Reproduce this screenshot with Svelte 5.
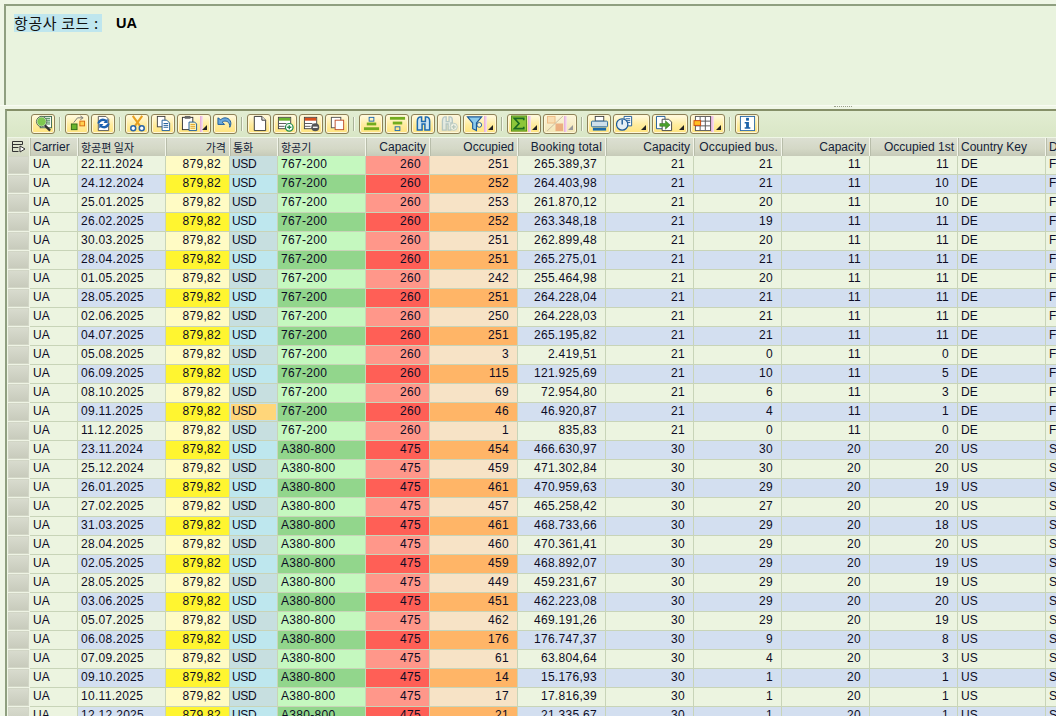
<script>
  const f = (date, occ, book, occB, occF, a380) => ({ date, occ, book, occB, occF, a380 });
  const rows = [
    f('22.11.2024',251,'265.389,37',21,11),f('24.12.2024',252,'264.403,98',21,10),f('25.01.2025',253,'261.870,12',20,10),
    f('26.02.2025',252,'263.348,18',19,11),f('30.03.2025',251,'262.899,48',20,11),f('28.04.2025',251,'265.275,01',21,11),
    f('01.05.2025',242,'255.464,98',20,11),f('28.05.2025',251,'264.228,04',21,11),f('02.06.2025',250,'264.228,03',21,11),
    f('04.07.2025',251,'265.195,82',21,11),f('05.08.2025',3,'2.419,51',0,0),f('06.09.2025',115,'121.925,69',10,5),
    f('08.10.2025',69,'72.954,80',6,3),f('09.11.2025',46,'46.920,87',4,1),f('11.12.2025',1,'835,83',0,0),
    f('23.11.2024',454,'466.630,97',30,20,1),f('25.12.2024',459,'471.302,84',30,20,1),f('26.01.2025',461,'470.959,63',29,19,1),
    f('27.02.2025',457,'465.258,42',27,20,1),f('31.03.2025',461,'468.733,66',29,18,1),f('28.04.2025',460,'470.361,41',29,20,1),
    f('02.05.2025',459,'468.892,07',29,19,1),f('28.05.2025',449,'459.231,67',29,19,1),f('03.06.2025',451,'462.223,08',29,20,1),
    f('05.07.2025',462,'469.191,26',29,19,1),f('06.08.2025',176,'176.747,37',9,8,1),f('07.09.2025',61,'63.804,64',4,3,1),
    f('09.10.2025',14,'15.176,93',1,1,1),f('10.11.2025',17,'17.816,39',1,1,1),f('12.12.2025',21,'21.335,67',1,1,1)
  ];
</script>

<div class="page">
  <section class="top">
    <div class="title"><span class="label">항공사 코드 :</span><strong class="code">UA</strong></div>
  </section>
  <div class="splitter"><span class="grip"></span></div>
  <section class="alv">
    <div class="toolbar">
      <div class="tb w24"><svg viewBox="0 0 20 18"><rect x="6.500" y="1.500" width="12" height="12" fill="#fff" stroke="#3c6a50"/><path d="M12 3.500h5M13 5.500h4M13 7.500h4M13 9.500h4" stroke="#2c7d3a"/><circle cx="8" cy="7" r="5" fill="#7ec850" stroke="#d8ecd0"/><circle cx="8" cy="7" r="5.500" fill="none" stroke="#5a6a5a"/><path d="M11.500 11l5.500 5.500" stroke="#333" stroke-width="2.400"/></svg></div>
      <span class="sep"></span>
      <div class="tb w24"><svg viewBox="0 0 20 18"><rect x="3.500" y="9.500" width="6" height="6" fill="#6ab42c" stroke="#2f6a17"/><rect x="12.500" y="6.500" width="5" height="5" fill="#ffd050" stroke="#d86a10"/><path d="M6 8L10 3h5" fill="none" stroke="#777"/><path d="M13 1l3 2-3 2" fill="none" stroke="#777"/></svg></div>
      <div class="tb w24"><svg viewBox="0 0 20 18"><path d="M4.500 1.500h8l3 3v12h-11z" fill="#fff" stroke="#555"/><path d="M3.500 9a6 6 0 0 1 9.500-4l1.500-1v4.500H10l1.500-1.500a3.800 3.800 0 0 0-5.500 2zM16.500 9a6 6 0 0 1-9.500 4l-1.500 1V9.500H10l-1.500 1.500a3.800 3.800 0 0 0 5.500-2z" fill="#1c62b0"/></svg></div>
      <span class="sep"></span>
      <div class="tb w24"><svg viewBox="0 0 20 18"><path d="M5 1l8 11M15 1L7 12" stroke="#e8a020" stroke-width="2.200"/><circle cx="5.500" cy="14" r="2.600" fill="#fff" stroke="#2a66a8" stroke-width="1.600"/><circle cx="14.500" cy="14" r="2.600" fill="#fff" stroke="#2a66a8" stroke-width="1.600"/></svg></div>
      <div class="tb w24"><svg viewBox="0 0 20 18"><rect x="3.500" y="1.500" width="8" height="11" fill="#fff" stroke="#444"/><path d="M8.500 5.500h5l3 3v8h-8z" fill="#fff" stroke="#1c5a98"/><path d="M10 9h5M10 11h5M10 13h5" stroke="#1c5a98"/></svg></div>
      <div class="tb w34 menu paste"><svg viewBox="0 0 20 18"><rect x="2.500" y="2.500" width="11" height="13" fill="#fff" stroke="#333"/><rect x="5" y="1" width="6" height="3" fill="#666"/><path d="M9.500 7.500h6l2 2v7h-8z" fill="#fff6c0" stroke="#1c5a98"/><path d="M11 10h5M11 12h5M11 14h5" stroke="#e0a020"/></svg></div>
      <div class="tb w24"><svg viewBox="0 0 20 18"><path d="M2 3v7h7L6.500 7.500C10 5 15 7 14.500 13c3-5 0-10-5-10-2 0-3.500 1-4.500 2z" fill="#6aa8dc" stroke="#1c5a98"/></svg></div>
      <span class="sep"></span>
      <div class="tb w24"><svg viewBox="0 0 20 18"><path d="M4.500 1.500h8l4 4v11h-12z" fill="#fff" stroke="#333"/><path d="M12.500 1.500v4h4" fill="#eee" stroke="#333"/></svg></div>
      <div class="tb w24"><svg viewBox="0 0 20 18"><rect x="2.500" y="2.500" width="13" height="12" fill="#fff" stroke="#444"/><rect x="3" y="3" width="12" height="3" fill="#6ab42c"/><path d="M3 9h8M3 12h6" stroke="#555"/><circle cx="14" cy="13" r="4" fill="#fff" stroke="#1f8a4a" stroke-width="1.300"/><path d="M11.800 13h4.400M14 10.800v4.400" stroke="#1f8a4a" stroke-width="1.400"/></svg></div>
      <div class="tb w24"><svg viewBox="0 0 20 18"><rect x="2.500" y="2.500" width="13" height="12" fill="#fff" stroke="#444"/><rect x="3" y="3" width="12" height="3" fill="#d8501e"/><path d="M3 9h8M3 12h6" stroke="#555"/><circle cx="14" cy="13" r="4.200" fill="#555"/><path d="M11.500 13h5" stroke="#fff" stroke-width="1.400"/></svg></div>
      <div class="tb w24"><svg viewBox="0 0 20 18"><rect x="3.500" y="2.500" width="10" height="11" fill="#fff" stroke="#555"/><rect x="7.500" y="5.500" width="9" height="10" fill="#fff" stroke="#c0502c"/></svg></div>
      <span class="sep"></span>
      <div class="tb w24"><svg viewBox="0 0 20 18"><rect x="7.500" y="2.500" width="5" height="4" fill="none" stroke="#1c6ab0"/><rect x="5" y="8" width="10" height="3" fill="#72ac1e"/><rect x="2" y="13" width="16" height="3" fill="#72ac1e"/></svg></div>
      <div class="tb w24"><svg viewBox="0 0 20 18"><rect x="2" y="2" width="16" height="3" fill="#72ac1e"/><rect x="5" y="7" width="10" height="3" fill="#72ac1e"/><rect x="7.500" y="12.500" width="5" height="4" fill="none" stroke="#1c6ab0"/></svg></div>
      <div class="tb w24"><svg viewBox="0 0 20 18"><path d="M3.500 6.500q0-4 3-4.500h1.500v5h4V2h1.500q3 .5 3 4.500v9.500h-5V9.500h-3v6.500h-5z" fill="#cfe6f2" stroke="#1c6ab0" stroke-width="1.600"/></svg></div>
      <div class="tb w24 off"><svg viewBox="0 0 20 18"><path d="M2.500 6.500q0-4 2.500-4.500h1.500v5h3V2H11q2 .5 2 3.500v3h-1.500v7.500h-3V9.500H6.500v6.500h-4z" fill="#dfeaea" stroke="#9cb8c0" stroke-width="1.400"/><circle cx="14.500" cy="12.500" r="3.800" fill="#eef4f0" stroke="#a8c0c0"/><path d="M12.300 12.500h4.400M14.500 10.300v4.400" stroke="#9cb8b8" stroke-width="1.300"/></svg></div>
      <div class="tb w34 menu"><svg viewBox="0 0 20 18"><path d="M1.500 2h15l-5.500 6.500v8l-4-2V8.500z" fill="#8ccbec" stroke="#1c5a98" stroke-width="1.200"/><circle cx="14" cy="10.500" r="2.500" fill="#fff6d0" stroke="#1c5a98"/></svg></div>
      <span class="sep"></span>
      <div class="tb w34 menu sum"><svg viewBox="0 0 20 18"><rect x="1.500" y="1" width="16" height="16" fill="#8cc63a" stroke="#4d8a1c"/><path d="M14.500 5.500V3.500H4.500L9.500 9l-5 5.500h10v-2" fill="none" stroke="#1c6a22" stroke-width="1.800"/></svg></div>
      <div class="tb w34 menu off sum"><svg viewBox="0 0 20 18"><rect x="1.500" y="1.500" width="8" height="7" fill="#f8d8a8" stroke="#eba868"/><rect x="10" y="9" width="8" height="8" fill="#e89868"/><path d="M1 17L18 1" stroke="#b8a890"/></svg></div>
      <span class="sep"></span>
      <div class="tb w24"><svg viewBox="0 0 20 18"><rect x="5.500" y="1.500" width="9" height="5" fill="#fff" stroke="#444"/><rect x="1.500" y="6.500" width="17" height="6" rx="1" fill="#cfe0ea" stroke="#2a6a9c"/><rect x="3" y="13.500" width="14" height="3" fill="#1c6aa8"/></svg></div>
      <div class="tb w37 menu2"><svg viewBox="0 0 20 18"><path d="M8.500 1.500h8v10h-8z" fill="#fff" stroke="#1c5a98"/><path d="M10 4h5M10 6h5M10 8h5" stroke="#1c5a98"/><circle cx="6.500" cy="10" r="6" fill="#e4eef4" stroke="#1c5a98" stroke-width="1.300"/><path d="M6.500 5v5" stroke="#1c5a98" stroke-width="1.500"/></svg></div>
      <div class="tb w36 menu2"><svg viewBox="0 0 20 18"><path d="M1.500 1.500h9v4h-2v9h-7z" fill="#fff" stroke="#1c5a98"/><path d="M7.500 4.500h7l3 3v9h-10z" fill="#fff" stroke="#444"/><path d="M5 9h6V6l5 4.500-5 4.500v-3H5z" fill="#4aa02c" stroke="#2a6a18" stroke-width=".5"/></svg></div>
      <div class="tb w35 menu"><svg viewBox="0 0 20 18"><rect x="2.500" y="1.500" width="16" height="15" fill="#fff" stroke="#555"/><path d="M7.500 2v14M13 2v14M3 6.500h15M3 11.500h15" stroke="#555"/><rect x="1" y="6" width="7" height="5" fill="#ffc020" stroke="#d04a10"/></svg></div>
      <span class="sep"></span>
      <div class="tb w24"><svg viewBox="0 0 20 18"><rect x="2.500" y="1.500" width="15" height="15" fill="#fff" stroke="#2a6aa8"/><rect x="8.500" y="3" width="3" height="3" fill="#1c62a8"/><path d="M7 7.500h4.500V13H13v1.500H7V13h1.500V9H7z" fill="#1c62a8"/></svg></div>
    </div>
    <div class="grid">
      <div class="row head">
        <div class="corner"><svg width="14" height="12" viewBox="0 0 14 12"><path d="M.5.500h10v3M.5.500v10h6M.5 3.500h10M.5 6.500h6" fill="none" stroke="#333"/><path d="M8 5l5 3-5 3z" fill="#fff" stroke="#333"/></svg></div>
        <div class="h">Carrier</div><div class="h ko">항공편 일자</div><div class="h r ko">가격</div><div class="h ko">통화</div><div class="h ko">항공기</div>
        <div class="h r">Capacity</div><div class="h r">Occupied</div><div class="h r wide">Booking total</div><div class="h r">Capacity</div><div class="h r wide">Occupied bus.</div><div class="h r">Capacity</div><div class="h r">Occupied 1st</div><div class="h">Country Key</div><div class="h">De</div>
      </div>
      {#each rows as x, i}
        <div class="row" class:even={i % 2 === 1}>
          <div class="sel"></div>
          <div class="c key">UA</div>
          <div class="c n z">{x.date}</div>
          <div class="c nr price">879,82</div>
          <div class="c cur" class:hot={i === 13}><span>USD</span></div>
          <div class="c n plane">{x.a380 ? 'A380-800' : '767-200'}</div>
          <div class="c nr cap">{x.a380 ? 475 : 260}</div>
          <div class="c nr occ">{x.occ}</div>
          <div class="c nr z">{x.book}</div>
          <div class="c nr z">{x.a380 ? 30 : 21}</div>
          <div class="c nr z">{x.occB}</div>
          <div class="c nr z">{x.a380 ? 20 : 11}</div>
          <div class="c nr z">{x.occF}</div>
          <div class="c z">{x.a380 ? 'US' : 'DE'}</div>
          <div class="c z">{x.a380 ? 'SFO' : 'FRA'}</div>
        </div>
      {/each}
    </div>
  </section>
</div>

<style>
  :global(body) { margin: 0; background: #eff6e6; overflow: hidden; }
  .page { width: 1056px; height: 716px; overflow: hidden; padding-top: 4px; box-sizing: border-box; font-family: "Liberation Sans", "Noto Sans CJK KR", sans-serif; font-size: 12px; color: #0c0c24; }
  .top { height: 101px; margin-left: 4px; border-top: 2px solid #8f9f80; border-left: 2px solid #8f9f80; background: #e9f3de; box-sizing: border-box; padding: 8px 0 0 8px; }
  .title { display: flex; align-items: center; height: 18px; }
  .label { display: block; width: 88px; height: 18px; line-height: 17px; background: #bfe6ee; font-family: "Noto Sans CJK KR", sans-serif; font-size: 15px; white-space: nowrap; letter-spacing: .6px; color: #111; }
  .code { margin-left: 14px; font-size: 14.500px; color: #000; }
  .splitter { height: 4px; border-top: 1px solid #f8fbf2; box-sizing: border-box; position: relative; }
  .grip { position: absolute; left: 834px; top: 0; width: 18px; border-top: 1px dotted #9aa08a; }
  .alv { margin-left: 5px; border-top: 2px solid #858f68; border-left: 2px solid #8f9f80; }
  .toolbar { height: 26px; display: flex; align-items: center; gap: 2px; padding: 0 0 1px 24px; box-sizing: border-box; background: linear-gradient(#e2edd2, #d9e6c6); }
  .sep { width: 2px; height: 14px; margin: 0 2px; background: #a9b298; border-right: 1px solid #f4f8ea; box-sizing: border-box; }
  .tb { position: relative; height: 20px; box-sizing: border-box; border: 1px solid #8d8158; border-radius: 3px; background: linear-gradient(#fffbe2, #ffec9e 55%, #ffe47e); box-shadow: inset 0 0 0 1px #fff8d8; flex: none; display: flex; align-items: center; padding-left: 2px; }
  .tb svg { width: 19px; height: 17px; display: block; }
  .w24 { width: 24px; } .w34 { width: 34px; } .w35 { width: 35px; } .w36 { width: 36px; } .w37 { width: 37px; }
  .off svg { opacity: .72; }
  .off { background: linear-gradient(#fbf5dc, #f2e6b4); }
  .menu::before { content: ""; position: absolute; left: 20px; top: 1px; bottom: 1px; width: 3px; background: linear-gradient(90deg, #e4a8d8, #f6e6f0); }
  .paste::before { left: 22px; }
  .sum::before { left: 20px; }
  .menu::after, .menu2::after { content: ""; position: absolute; right: 3px; bottom: 3px; border-style: solid; border-width: 0 0 5px 5px; border-color: transparent transparent #222 transparent; }
  .off::after { border-color: transparent transparent #999 transparent; }
  .grid { width: 1200px; }
  .row { display: grid; grid-template-columns: 22px 48px 88px 64px 48px 88px 64px 88px 88px 88px 88px 88px 88px 88px 88px; height: 19px; padding-left: 1px; }
  .head { height: 18px; margin-top: 1px; }
  .corner { display: flex; align-items: center; justify-content: center; border-right: 1px solid #eef3e4; background: linear-gradient(#e4e9d6, #d3d9c2); box-sizing: border-box; }
  .h { background: linear-gradient(#dcdfd2, #d4d8c6 60%, #c6cab8); border-right: 1px solid #f2f5ea; border-left: 1px solid #b8bdaa; line-height: 18px; padding: 0 3px 0 2px; box-sizing: border-box; white-space: nowrap; overflow: hidden; color: #142238; }
  .wide { letter-spacing: .15px; }
  .ko { font-family: "Noto Sans CJK KR", sans-serif; font-size: 11px; }
  .r { text-align: right; }
  .sel { background: linear-gradient(#d9dccf, #c7cabb); border: 1px solid #eef3e4; border-width: 0 1px 1px 0; box-sizing: border-box; box-shadow: inset 0 0 0 1px #d2d6c6; }
  .c { background: #ecf4e0; border-right: 1px solid #c8d4b8; border-bottom: 1px solid #c8d4b8; box-sizing: border-box; line-height: 17px; padding: 0 3px; white-space: nowrap; overflow: hidden; }
  .n, .nr { letter-spacing: .3px; }
  .nr { text-align: right; padding-right: 8px; }
  .cur span { letter-spacing: -.3px; }
  .price { background: #fffbc4; }
  .cur { background: #c7dfe0; padding-left: 2px; }
  .plane { background: #c5f8bf; }
  .cap { background: #ff978a; }
  .occ { background: #f7e3c6; }
  .even .z { background: #d3dff0; }
  .even .price { background: #fff530; }
  .even .cur { background: #bee7ee; }
  .even .plane { background: #92d68c; }
  .even .cap { background: #ff5f56; }
  .even .occ { background: #ffb567; }
  .even .cur.hot { background: #c7dfe0; padding: 1px; }
  .hot span { display: block; background: #ffd67a; height: 16px; line-height: 15px; padding-left: 1px; }
</style>
